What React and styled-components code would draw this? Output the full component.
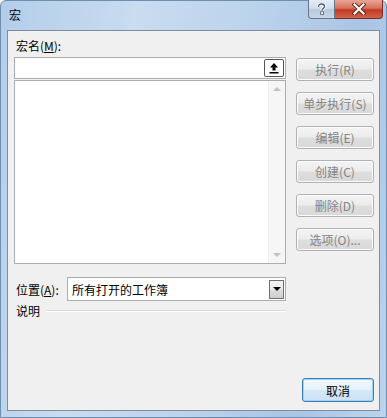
import React from "react";
import styled, { createGlobalStyle } from "styled-components";

const GlobalStyle = createGlobalStyle`
  html, body {
    margin: 0;
    padding: 0;
    background: #ffffff;
  }
  body {
    font-family: "Noto Sans CJK SC", "Liberation Sans", sans-serif;
    font-size: 12px;
  }
`;

const ACTIONS = [
  { key: "run", text: "执行(R)" },
  { key: "step", text: "单步执行(S)" },
  { key: "edit", text: "编辑(E)" },
  { key: "create", text: "创建(C)" },
  { key: "delete", text: "删除(D)" },
  { key: "options", text: "选项(O)..." },
];

const Window = styled.div`
  width: 387px;
  height: 418px;
  box-sizing: border-box;
  display: flex;
  flex-direction: column;
  padding: 0 6px 6px 6px;
  background: linear-gradient(
    100deg,
    #b3cde9 0%,
    #c9dcf0 30%,
    #bcd3ec 55%,
    #a9c5e4 80%,
    #bcd3ec 100%
  );
  border: 1px solid #6f8fb0;
  border-radius: 6px 6px 0 0;
`;

const TitleBar = styled.div`
  height: 29px;
  display: flex;
  align-items: flex-start;
  justify-content: space-between;
`;

const Title = styled.div`
  padding: 5px 0 0 2px;
  font-size: 12px;
  color: #000;
  line-height: 18px;
`;

const Caption = styled.div`
  display: flex;
  margin-right: -3px;
  margin-top: -1px;
`;

const CaptionButton = styled.div`
  height: 19px;
  width: ${(p) => (p.$close ? "48px" : "27px")};
  box-sizing: border-box;
  border: 1px solid ${(p) => (p.$close ? "#7a2d22" : "#66778b")};
  border-top: none;
  border-left-width: ${(p) => (p.$close ? "0" : "1px")};
  border-radius: ${(p) => (p.$close ? "0 0 4px 0" : "0 0 0 4px")};
  background: ${(p) =>
    p.$close
      ? "linear-gradient(#e9a595 0%, #d7725f 45%, #c0381f 55%, #d2654b 100%)"
      : "linear-gradient(#e5ecf5 0%, #d2dded 45%, #b8c8dc 55%, #c9d7e8 100%)"};
  display: flex;
  align-items: center;
  justify-content: center;
`;

const Client = styled.div`
  flex: 1;
  display: flex;
  flex-direction: column;
  background: #f0f0f0;
  border: 1px solid #7d8ea1;
  padding: 6px 5px 8px 6px;
`;

const Main = styled.div`
  display: flex;
  gap: 10px;
`;

const LeftColumn = styled.div`
  width: 272px;
  display: flex;
  flex-direction: column;
`;

const Label = styled.div`
  height: 20px;
  line-height: 18px;
  padding-left: 2px;
  color: #000;
  u {
    text-decoration: underline;
  }
`;

const NameBox = styled.div`
  height: 22px;
  box-sizing: border-box;
  border: 1px solid #abadb3;
  background: #fff;
  display: flex;
  justify-content: flex-end;
  align-items: center;
  padding-right: 1px;
`;

const UploadButton = styled.div`
  width: 20px;
  height: 18px;
  box-sizing: border-box;
  border: 1px solid #555;
  border-radius: 2px;
  background: #fdfdfd;
  display: flex;
  align-items: center;
  justify-content: center;
`;

const ListBox = styled.div`
  margin-top: 1px;
  height: 184px;
  box-sizing: border-box;
  border: 1px solid #abadb3;
  background: #fff;
  display: flex;
  justify-content: flex-end;
`;

const ScrollBar = styled.div`
  width: 16px;
  background: #f6f6f6;
  border-left: 1px solid #ececec;
  display: flex;
  flex-direction: column;
  justify-content: space-between;
  align-items: center;
  padding: 6px 0 6px;
`;

const Arrow = styled.div`
  width: 0;
  height: 0;
  border-left: 4px solid transparent;
  border-right: 4px solid transparent;
  ${(p) =>
    p.$up
      ? "border-bottom: 4px solid #c2c2c2;"
      : "border-top: 4px solid #c2c2c2;"}
`;

const RightColumn = styled.div`
  display: flex;
  flex-direction: column;
  gap: 11px;
  padding-top: 21px;
`;

const Button = styled.div`
  width: 78px;
  height: 23px;
  box-sizing: border-box;
  border: 1px solid ${(p) => (p.$default ? "#3c7fb1" : "#adb2b5")};
  border-radius: 3px;
  background: ${(p) =>
    p.$default
      ? "linear-gradient(#f2f8fc 0%, #e5f1fb 48%, #d4e8f7 52%, #c9e2f5 100%)"
      : "linear-gradient(#f4f4f4 0%, #ececec 48%, #dedede 52%, #d9d9d9 100%)"};
  box-shadow: ${(p) =>
    p.$default ? "inset 0 0 0 1px #9fd1f2" : "inset 0 0 0 1px #fbfbfb"};
  color: ${(p) => (p.$default ? "#000" : "#838383")};
  display: flex;
  align-items: center;
  justify-content: center;
  font-size: 12px;
`;

const LocationRow = styled.div`
  margin-top: 13px;
  display: flex;
  align-items: center;
  width: 272px;
`;

const LocationLabel = styled.div`
  width: 53px;
  padding-left: 2px;
  box-sizing: border-box;
  color: #000;
`;

const Combo = styled.div`
  flex: 1;
  height: 24px;
  box-sizing: border-box;
  border: 1px solid #abadb3;
  background: #fff;
  display: flex;
  align-items: center;
  justify-content: space-between;
  padding: 0 1px 0 4px;
  color: #000;
`;

const DropButton = styled.div`
  width: 15px;
  height: 19px;
  box-sizing: border-box;
  border: 1px solid #707070;
  background: linear-gradient(#f2f2f2 0%, #ebebeb 48%, #dddddd 52%, #cfcfcf 100%);
  display: flex;
  align-items: center;
  justify-content: center;
`;

const BlackArrow = styled.div`
  width: 0;
  height: 0;
  border-left: 4px solid transparent;
  border-right: 4px solid transparent;
  border-top: 4px solid #000;
`;

const DescriptionRow = styled.div`
  margin-top: 1px;
  width: 272px;
  display: flex;
  align-items: center;
  gap: 6px;
  color: #000;
  padding-left: 2px;
  box-sizing: border-box;
  &::after {
    content: "";
    flex: 1;
    height: 1px;
    background: #dcdcdc;
    border-bottom: 1px solid #fff;
  }
`;

const Footer = styled.div`
  margin-top: auto;
  display: flex;
  justify-content: flex-end;
`;

const CancelButton = styled(Button)`
  width: 72px;
  height: 24px;
`;

const UploadIcon = () => (
  <svg width="12" height="12" viewBox="0 0 12 12">
    <path d="M6 1 L10 5.5 H7.5 V8.5 H4.5 V5.5 H2 Z" fill="#000" />
    <rect x="1.5" y="10" width="9" height="1.5" fill="#000" />
  </svg>
);

const QuestionIcon = () => (
  <svg width="11" height="12" viewBox="0 0 11 12">
    <path
      d="M2.5 4 C2.5 1.5 4 1 5.5 1 C7.5 1 8.5 2 8.5 3.5 C8.5 5.5 6 5.5 6 7.5"
      stroke="#f8fbff"
      strokeWidth="3.4"
      fill="none"
    />
    <path
      d="M2.5 4 C2.5 1.5 4 1 5.5 1 C7.5 1 8.5 2 8.5 3.5 C8.5 5.5 6 5.5 6 7.5"
      stroke="#4a5a6e"
      strokeWidth="1.3"
      fill="none"
    />
    <rect x="4.6" y="8.8" width="2.8" height="2.6" fill="#f8fbff" stroke="#4a5a6e" strokeWidth="0.8" />
  </svg>
);

const CloseIcon = () => (
  <svg width="14" height="12" viewBox="0 0 14 12">
    <path
      d="M2.5 1.5 L11.5 10.5 M11.5 1.5 L2.5 10.5"
      stroke="#5a1f16"
      strokeWidth="4"
      strokeLinecap="square"
    />
    <path
      d="M2.5 1.5 L11.5 10.5 M11.5 1.5 L2.5 10.5"
      stroke="#ffffff"
      strokeWidth="2.2"
      strokeLinecap="square"
    />
  </svg>
);

export default function App() {
  return (
    <>
      <GlobalStyle />
      <Window>
        <TitleBar>
          <Title>宏</Title>
          <Caption>
            <CaptionButton>
              <QuestionIcon />
            </CaptionButton>
            <CaptionButton $close>
              <CloseIcon />
            </CaptionButton>
          </Caption>
        </TitleBar>
        <Client>
          <Main>
            <LeftColumn>
              <Label>
                宏名(<u>M</u>):
              </Label>
              <NameBox>
                <UploadButton>
                  <UploadIcon />
                </UploadButton>
              </NameBox>
              <ListBox>
                <ScrollBar>
                  <Arrow $up />
                  <Arrow />
                </ScrollBar>
              </ListBox>
            </LeftColumn>
            <RightColumn>
              {ACTIONS.map((a) => (
                <Button key={a.key}>{a.text}</Button>
              ))}
            </RightColumn>
          </Main>
          <LocationRow>
            <LocationLabel>
              位置(<u>A</u>):
            </LocationLabel>
            <Combo>
              <span>所有打开的工作簿</span>
              <DropButton>
                <BlackArrow />
              </DropButton>
            </Combo>
          </LocationRow>
          <DescriptionRow>说明</DescriptionRow>
          <Footer>
            <CancelButton $default>取消</CancelButton>
          </Footer>
        </Client>
      </Window>
    </>
  );
}
